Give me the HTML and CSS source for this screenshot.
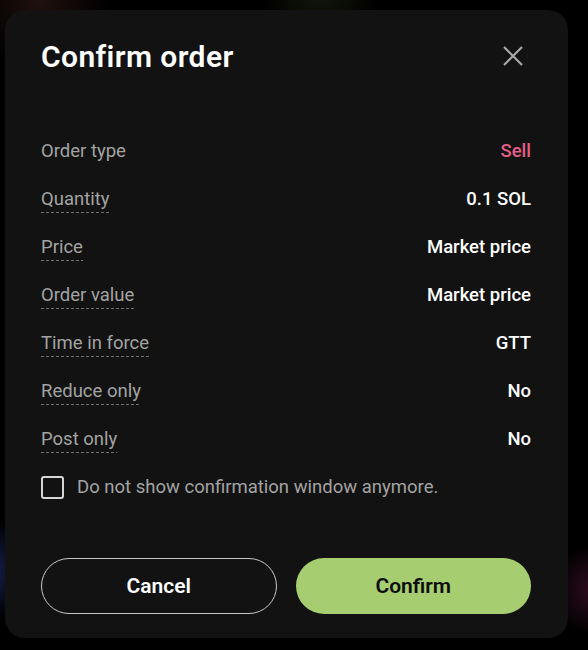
FILE: index.html
```html
<!DOCTYPE html>
<html lang="en">
<head>
  <meta charset="UTF-8">
  <title>Confirm order</title>
  <link rel="stylesheet" href="styles.css">
</head>
<body>

  <div class="modal">
    <div class="modal-head">
      <h2>Confirm order</h2>
      <button class="close-btn" aria-label="Close">
        <svg width="20" height="20" viewBox="0 0 20 20">
          <path d="M1 1 L19 19 M19 1 L1 19" stroke="#a8a8a8" stroke-width="2.2" fill="none"/>
        </svg>
      </button>
    </div>

    <div class="rows">
      <div class="row">
        <span class="label">Order type</span>
        <span class="value sell">Sell</span>
      </div>
      <div class="row">
        <span class="label dashed">Quantity</span>
        <span class="value">0.1 SOL</span>
      </div>
      <div class="row">
        <span class="label dashed">Price</span>
        <span class="value">Market price</span>
      </div>
      <div class="row">
        <span class="label dashed">Order value</span>
        <span class="value">Market price</span>
      </div>
      <div class="row">
        <span class="label dashed">Time in force</span>
        <span class="value">GTT</span>
      </div>
      <div class="row">
        <span class="label dashed">Reduce only</span>
        <span class="value">No</span>
      </div>
      <div class="row">
        <span class="label dashed">Post only</span>
        <span class="value">No</span>
      </div>
    </div>

    <label class="check-row">
      <span class="checkbox"></span>
      <span>Do not show confirmation window anymore.</span>
    </label>

    <div class="actions">
      <button class="btn btn-cancel">Cancel</button>
      <button class="btn btn-confirm">Confirm</button>
    </div>
  </div>

</body>
</html>
```

FILE: styles.css
```css
body {
  margin: 0;
  height: 650px;
  overflow: hidden;
  font-family: Roboto, "Noto Sans", sans-serif;
  background-color: #000;
  background-image:
    radial-gradient(circle at 40px 0px, rgba(70, 35, 30, 0.45), transparent 70px),
    radial-gradient(circle at 320px -10px, rgba(50, 60, 30, 0.4), transparent 60px),
    radial-gradient(circle at -10px 570px, rgba(30, 45, 110, 0.7), transparent 50px),
    radial-gradient(circle at 595px 590px, rgba(90, 25, 60, 0.55), transparent 45px);
}

.modal {
  box-sizing: border-box;
  width: 563px;
  margin: 10px 0 0 5px;
  padding: 28px 37px 24px 36px;
  background-color: #121212;
  border-radius: 20px;
}

.modal-head {
  display: flex;
  justify-content: space-between;
  align-items: center;
  height: 36px;
}

.modal-head h2 {
  margin: 0;
  font-size: 30px;
  font-weight: 600;
  letter-spacing: 0.4px;
  color: #fff;
}

.close-btn {
  width: 36px;
  height: 36px;
  padding: 0;
  border: none;
  background: none;
  display: flex;
  align-items: center;
  justify-content: center;
  cursor: pointer;
}

.rows {
  margin-top: 53px;
}

.row {
  display: flex;
  justify-content: space-between;
  align-items: center;
  height: 48px;
  font-size: 18.5px;
}

.label {
  color: #a3a3a3;
}

.label.dashed {
  padding-bottom: 3px;
  margin-bottom: -3px;
  background-image: repeating-linear-gradient(90deg, #707070 0 3px, transparent 3px 5px);
  background-size: 100% 1px;
  background-repeat: no-repeat;
  background-position: left bottom;
}

.value {
  color: #fff;
  font-weight: 500;
}

.value.sell {
  color: #e35f87;
}

.check-row {
  display: flex;
  align-items: center;
  gap: 13px;
  height: 48px;
  font-size: 18.5px;
  color: #a3a3a3;
}

.checkbox {
  box-sizing: border-box;
  width: 23px;
  height: 23px;
  border: 2px solid #d6d6d6;
  border-radius: 3px;
}

.actions {
  display: grid;
  grid-template-columns: 1fr 1fr;
  gap: 19px;
  margin-top: 47px;
}

.btn {
  height: 56px;
  border-radius: 28px;
  font-family: Roboto, "Noto Sans", sans-serif;
  font-size: 21px;
  font-weight: 600;
  cursor: pointer;
}

.btn-cancel {
  background: none;
  border: 1px solid #c8c8c8;
  color: #fff;
}

.btn-confirm {
  background-color: #a6cd6f;
  border: none;
  color: #0d0d0d;
}
```
